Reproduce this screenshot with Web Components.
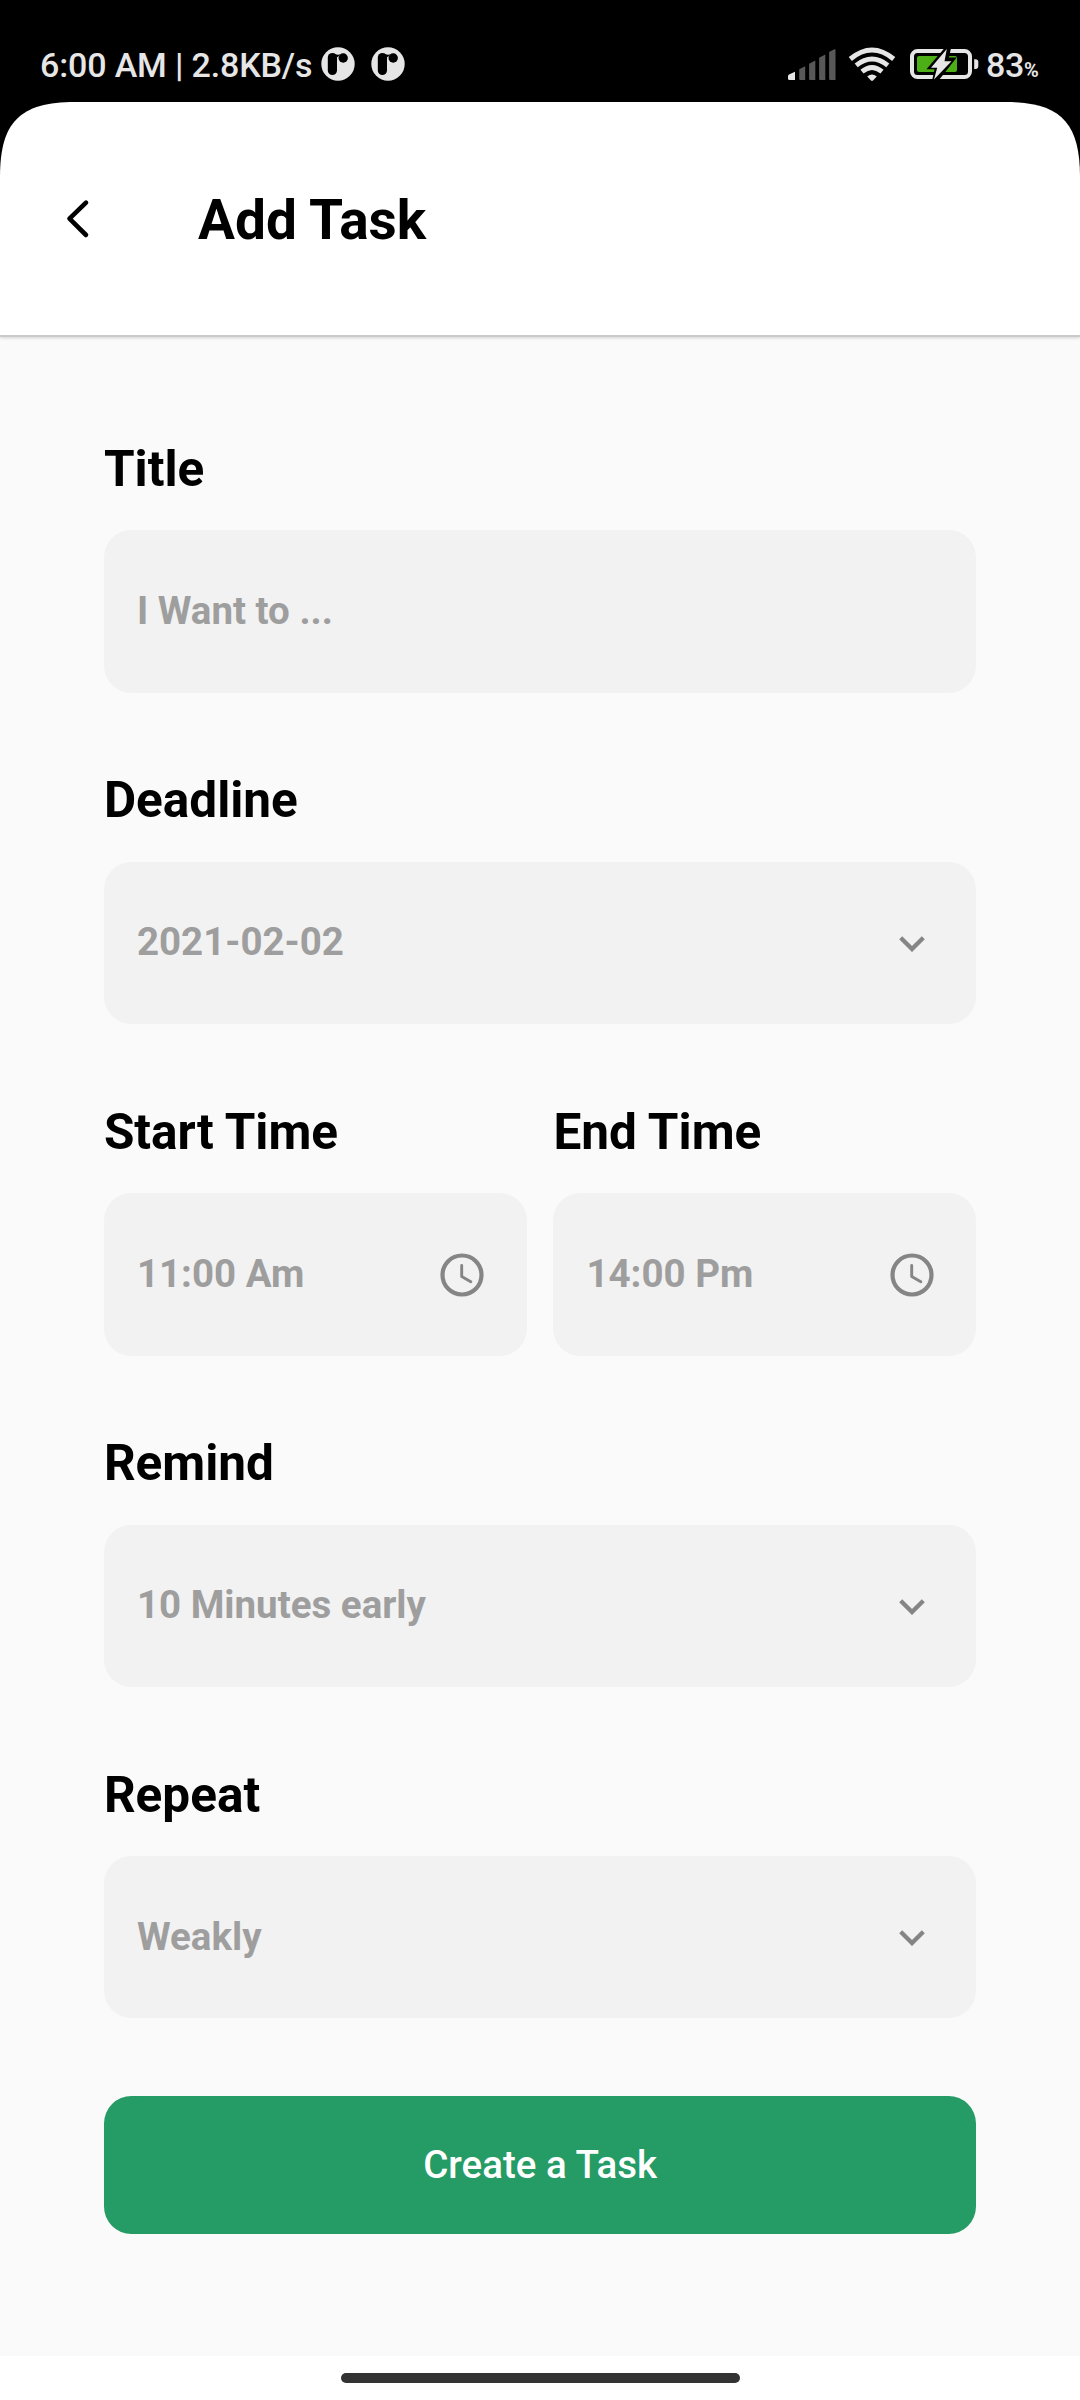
<!DOCTYPE html>
<html lang="en">
<head>
<meta charset="utf-8">
<title>Add Task</title>
<style>
html,body{margin:0;padding:0;background:#fafafa}
body{font-family:Roboto,"Liberation Sans",sans-serif}
</style>
</head>
<body>
<task-screen></task-screen>
<script>
const define = (name, html) => customElements.define(name, class extends HTMLElement {
  constructor() {
    super();
    const t = document.createElement('template');
    t.innerHTML = html;
    this.attachShadow({ mode: 'open' }).appendChild(t.content.cloneNode(true));
  }
});

define('app-badge', `
<style>:host{display:block;width:34px;height:34px}svg{display:block}</style>
<svg width="34" height="34" viewBox="0 0 34 34"><circle cx="17" cy="17" r="16.700" fill="#e6e6e6"/><rect x="6.800" y="6" width="9.200" height="22" rx="4.600" fill="#000"/><path d="M13 6.400Q16 8.400 19.500 7.300L17.600 9.200L15.800 10.600Z" fill="#000"/><circle cx="22.200" cy="11" r="4.700" fill="#000"/></svg>`);

define('signal-icon', `
<style>:host{display:block}svg{display:block}</style>
<svg width="48" height="34" viewBox="0 0 48 34"><path d="M0 28Q0 27.200 1 26.600L7 23.800V32H1.500Q0 32 0 30.500Z" fill="#e6e6e6"/><g fill="#585858"><path d="M11.200 21.200L17.200 18.200V32H12.200Q11.200 32 11.200 31Z"/><path d="M21.100 15.800L27.300 12.600V32H22.100Q21.100 32 21.100 31Z"/><path d="M31.100 9.800L37.300 6.600V32H32.100Q31.100 32 31.100 31Z"/><path d="M41.100 4L46.400 1.300Q47.500 1.100 47.500 2.200V32H42.100Q41.100 32 41.100 31Z"/></g></svg>`);

define('wifi-icon', `
<style>:host{display:block}svg{display:block}</style>
<svg width="48" height="36" viewBox="0 0 48 36"><g fill="none" stroke="#e6e6e6" stroke-width="4.900"><path d="M2.300 13Q24 -5 45.700 13"/><path d="M8.200 19.300Q24 6.700 39.800 19.300"/><path d="M14 25.700Q24 17.300 34 25.700"/></g><path d="M19.200 30.600Q24 26.200 28.800 30.600L25 34.600Q24 35.300 23 34.600Z" fill="#e6e6e6"/></svg>`);

define('battery-icon', `
<style>:host{display:block}svg{display:block}</style>
<svg width="70" height="34" viewBox="0 0 70 34"><rect x="2" y="3" width="58" height="26" rx="5.500" fill="none" stroke="#e6e6e6" stroke-width="4"/><rect x="7" y="8" width="40" height="16" rx="2" fill="#4caf16"/><path d="M64.200 11.200H65.500Q68.300 11.200 68.300 14V18Q68.300 21 65.500 21H64.200Z" fill="#e6e6e6"/><path d="M35 -.5L16.400 21.200H24.500L21.800 34L29 32L46.700 9.500H39L41 0Z" fill="#000"/><path d="M36.800 1L21 19.800H27.200L24 31.500L41.500 13.300H34.500Z" fill="#e6e6e6"/></svg>`);

define('status-bar', `
<style>
:host{display:flex;height:102px;background:#000;color:#e6e6e6;box-sizing:border-box;padding:0 0 0 40px;align-items:flex-start;justify-content:space-between;font-size:34px;font-weight:500;line-height:40px}
.l,.r{display:flex;align-items:flex-start}
.l{gap:8px}
.r{width:292px}
.t{width:273px;white-space:pre;margin-top:45px;letter-spacing:-.15px}
.badges{display:flex;gap:16px;margin-top:47px}
signal-icon{margin-top:48px}
wifi-icon{margin:46px 0 0 12px}
battery-icon{margin:48px 0 0 14px}
.p{margin:45px 0 0 6px;white-space:nowrap;letter-spacing:-.3px}
.p small{font-size:20px;font-weight:700}
</style>
<div class="l"><div class="t">6:00 AM | 2.8KB/s</div><div class="badges"><app-badge></app-badge><app-badge></app-badge></div></div>
<div class="r"><signal-icon></signal-icon><wifi-icon></wifi-icon><battery-icon></battery-icon><div class="p">83<small>%</small></div></div>`);

define('app-header', `
<style>
:host{display:block;background:#000;height:233px;box-shadow:0 2px 0 #cacaca,0 3px 3px rgba(0,0,0,.16)}
header{display:flex;align-items:flex-start;height:233px;box-sizing:border-box;padding:0 66px;background:#fff;clip-path:path("M0 233V75C0 20 20 0 75 0H1005C1060 0 1080 20 1080 75V233Z")}
svg{display:block;margin-top:97px}
h1{margin:85px 0 0 108px;font-size:55px;line-height:66px;font-weight:700;color:#000;white-space:nowrap}
</style>
<header><svg width="24" height="40" viewBox="0 0 24 40"><path d="M20 3.700L3.500 19.700L20 36" fill="none" stroke="#000" stroke-width="4.600" stroke-linecap="round" stroke-linejoin="round"/></svg><h1><slot></slot></h1></header>`);

define('chevron-icon', `
<style>:host{display:block}svg{display:block}</style>
<svg width="26" height="16" viewBox="0 0 26 16"><path d="M1.700 1.700L13 13L24.300 1.700" fill="none" stroke="#858585" stroke-width="4.300"/></svg>`);

define('clock-icon', `
<style>:host{display:block}svg{display:block}</style>
<svg width="44" height="44" viewBox="0 0 44 44"><circle cx="22" cy="22" r="19.500" fill="none" stroke="#858585" stroke-width="4.200"/><path d="M21.700 12.500V23.600L30.800 28.800" fill="none" stroke="#858585" stroke-width="2.900" stroke-linecap="round" stroke-linejoin="round"/></svg>`);

define('form-field', `
<style>
:host{display:block;min-width:0}
.label{font-size:49.500px;line-height:58px;height:90.400px;font-weight:700;color:#000;white-space:nowrap}
.box{display:flex;align-items:center;justify-content:space-between;box-sizing:border-box;height:162.250px;padding:0 42.500px 0 33px;border-radius:27.500px;background:#f2f2f2}
.value{font-size:38.500px;line-height:46px;font-weight:700;color:#9e9e9e;white-space:nowrap;margin-bottom:1px}
::slotted(chevron-icon){margin:2px 9px 0 0}
::slotted(clock-icon){margin-top:1px}
</style>
<div class="label"><slot name="label"></slot></div>
<div class="box"><div class="value"><slot></slot></div><slot name="icon"></slot></div>`);

define('field-row', `
<style>:host{display:flex;gap:26.500px}::slotted(*){flex:1 1 0}</style><slot></slot>`);

define('primary-button', `
<style>
:host{display:block}
button{display:flex;align-items:center;justify-content:center;width:100%;height:137.500px;box-sizing:border-box;padding:1px 0 0;border:0;border-radius:27.500px;background:#259b65;color:#fff;font:500 38.500px/46px Roboto,sans-serif}
</style>
<button type="button"><slot></slot></button>`);

define('nav-bar', `
<style>
:host{display:flex;justify-content:center;align-items:flex-start;height:44px;background:#fff;box-sizing:border-box;padding-top:17px}
div{width:399px;height:10px;border-radius:5px;background:#333}
</style><div></div>`);

define('task-screen', `
<style>
:host{display:flex;flex-direction:column;width:1080px;height:2400px;background:#fafafa;overflow:hidden}
main{flex:1;display:flex;flex-direction:column;gap:78.800px;box-sizing:border-box;padding:105px 103.600px 0 103.900px}
nav-bar{flex:none}
primary-button{margin-top:-1px}
</style>
<status-bar></status-bar>
<app-header>Add Task</app-header>
<main>
<form-field><span slot="label">Title</span>I Want to ...</form-field>
<form-field><span slot="label">Deadline</span>2021-02-02<chevron-icon slot="icon"></chevron-icon></form-field>
<field-row>
<form-field><span slot="label">Start Time</span>11:00 Am<clock-icon slot="icon"></clock-icon></form-field>
<form-field><span slot="label">End Time</span>14:00 Pm<clock-icon slot="icon"></clock-icon></form-field>
</field-row>
<form-field><span slot="label">Remind</span>10 Minutes early<chevron-icon slot="icon"></chevron-icon></form-field>
<form-field><span slot="label">Repeat</span>Weakly<chevron-icon slot="icon"></chevron-icon></form-field>
<primary-button>Create a Task</primary-button>
</main>
<nav-bar></nav-bar>`);
</script>
</body>
</html>
